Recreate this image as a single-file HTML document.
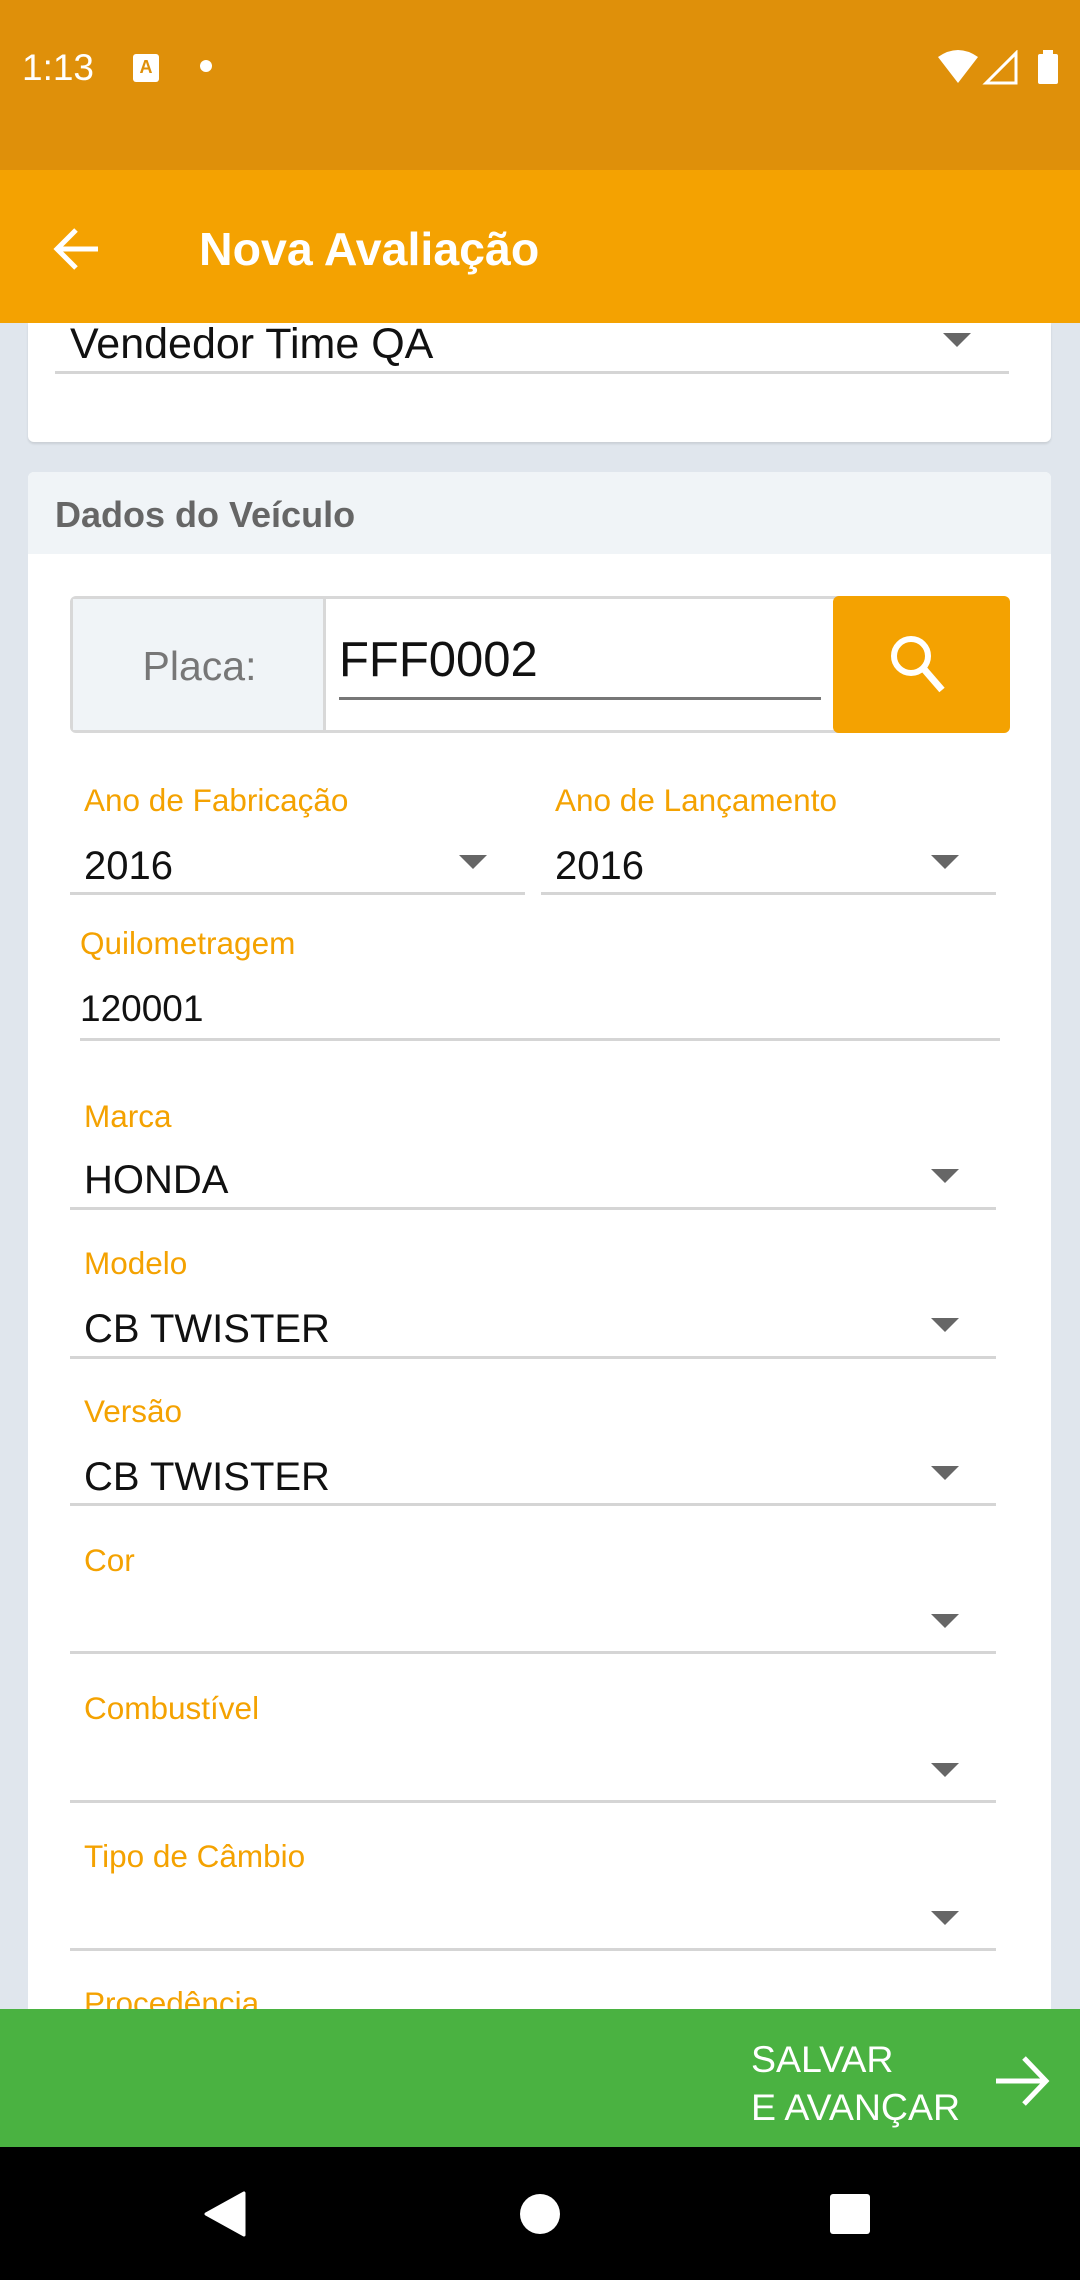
<!DOCTYPE html>
<html><head><meta charset="utf-8"><style>
*{margin:0;padding:0;box-sizing:border-box}
body{width:1080px;height:2280px;position:relative;overflow:hidden;background:#E0E6ED;font-family:"Liberation Sans",sans-serif}
.a{position:absolute}
.lbl{position:absolute;color:#F4A201;font-size:31.5px;line-height:1}
.val{position:absolute;color:#111;font-size:40px;line-height:1}
.ul{position:absolute;height:3px;background:#D5D5D5}
.tri{position:absolute;width:0;height:0;border-left:14px solid transparent;border-right:14px solid transparent;border-top:14px solid #666}
</style></head><body>
<div class="a" style="left:0;top:0;width:1080px;height:170px;background:#DF900A"></div>
<div class="a" style="left:22px;top:47px;color:#fff;font-size:37px">1:13</div>
<div class="a" style="left:133px;top:54px;width:26px;height:28px;background:#fff;border-radius:3px;color:#DF900A;font-size:18px;font-weight:bold;text-align:center;line-height:26px">A</div>
<div class="a" style="left:200px;top:60px;width:12px;height:12px;background:#fff;border-radius:50%"></div>
<svg class="a" style="left:938px;top:50px" width="130" height="36"><path d="M0 7 Q20 -7 40 7 L20 33Z" fill="#fff"/><path d="M48 33 L78 3 L78 33Z" fill="none" stroke="#fff" stroke-width="3"/><rect x="100" y="4" width="20" height="30" rx="2" fill="#fff"/><rect x="105" y="0" width="10" height="5" fill="#fff"/></svg>
<div class="a" style="left:0;top:170px;width:1080px;height:153px;background:#F4A201"></div>
<svg class="a" style="left:52px;top:226px" width="50" height="46"><path d="M46 23H6M24 4L5 23L24 42" fill="none" stroke="#fff" stroke-width="5"/></svg>
<div class="a" style="left:199px;top:222px;color:#fff;font-size:46.5px;font-weight:bold">Nova Avaliação</div>
<div class="a" style="left:28px;top:323px;width:1023px;height:119px;background:#fff;border-radius:0 0 6px 6px;box-shadow:0 2px 2px rgba(0,0,0,.1)"></div>
<div class="val" style="left:70px;top:323px;font-size:43px">Vendedor Time QA</div>
<div class="tri" style="left:943px;top:333px"></div>
<div class="ul" style="left:55px;top:371px;width:954px"></div>
<div class="a" style="left:28px;top:472px;width:1023px;height:1600px;background:#fff;border-radius:6px 6px 0 0"></div>
<div class="a" style="left:28px;top:472px;width:1023px;height:82px;background:#F0F4F7;border-radius:6px 6px 0 0"></div>
<div class="a" style="left:55px;top:494px;color:#666;font-size:36px;font-weight:bold">Dados do Veículo</div>
<div class="a" style="left:70px;top:596px;width:770px;height:137px;border:3px solid #D8D8D8;border-radius:6px 0 0 6px"></div>
<div class="a" style="left:73px;top:599px;width:253px;height:131px;background:#F0F4F7;border-right:3px solid #D8D8D8"></div>
<div class="a" style="left:73px;top:643px;width:253px;text-align:center;color:#777;font-size:41px">Placa:</div>
<div class="a" style="left:339px;top:632px;color:#111;font-size:49px">FFF0002</div>
<div class="a" style="left:339px;top:697px;width:482px;height:3px;background:#777"></div>
<div class="a" style="left:833px;top:596px;width:177px;height:137px;background:#F4A201;border-radius:6px"></div>
<svg class="a" style="left:886px;top:630px" width="70" height="70"><circle cx="25" cy="26" r="17" fill="none" stroke="#fff" stroke-width="6"/><path d="M37 38L56 60" stroke="#fff" stroke-width="7"/></svg>
<div class="lbl" style="left:84px;top:785px">Ano de Fabricação</div>
<div class="lbl" style="left:555px;top:785px">Ano de Lançamento</div>
<div class="val" style="left:84px;top:846px">2016</div>
<div class="val" style="left:555px;top:846px">2016</div>
<div class="tri" style="left:459px;top:855px"></div>
<div class="tri" style="left:931px;top:855px"></div>
<div class="ul" style="left:70px;top:892px;width:455px"></div>
<div class="ul" style="left:541px;top:892px;width:455px"></div>
<div class="lbl" style="left:80px;top:928px">Quilometragem</div>
<div class="val" style="left:80px;top:990px;font-size:37px">120001</div>
<div class="ul" style="left:80px;top:1038px;width:920px"></div>
<div class="lbl" style="left:84px;top:1101px">Marca</div>
<div class="val" style="left:84px;top:1160px">HONDA</div>
<div class="tri" style="left:931px;top:1169px"></div>
<div class="ul" style="left:70px;top:1207px;width:926px"></div>
<div class="lbl" style="left:84px;top:1248px">Modelo</div>
<div class="val" style="left:84px;top:1309px">CB TWISTER</div>
<div class="tri" style="left:931px;top:1318px"></div>
<div class="ul" style="left:70px;top:1356px;width:926px"></div>
<div class="lbl" style="left:84px;top:1396px">Versão</div>
<div class="val" style="left:84px;top:1457px">CB TWISTER</div>
<div class="tri" style="left:931px;top:1466px"></div>
<div class="ul" style="left:70px;top:1503px;width:926px"></div>
<div class="lbl" style="left:84px;top:1545px">Cor</div>
<div class="tri" style="left:931px;top:1614px"></div>
<div class="ul" style="left:70px;top:1651px;width:926px"></div>
<div class="lbl" style="left:84px;top:1693px">Combustível</div>
<div class="tri" style="left:931px;top:1763px"></div>
<div class="ul" style="left:70px;top:1800px;width:926px"></div>
<div class="lbl" style="left:84px;top:1841px">Tipo de Câmbio</div>
<div class="tri" style="left:931px;top:1911px"></div>
<div class="ul" style="left:70px;top:1948px;width:926px"></div>
<div class="lbl" style="left:84px;top:1988px">Procedência</div>
<div class="a" style="left:0;top:2009px;width:1080px;height:138px;background:#4AB241"></div>
<div class="a" style="left:751px;top:2035px;color:#fff;font-size:37.5px;line-height:48px">SALVAR<br>E AVANÇAR</div>
<svg class="a" style="left:994px;top:2054px" width="58" height="54"><path d="M2 27H50M30 4L52 27L30 50" fill="none" stroke="#fff" stroke-width="5"/></svg>
<div class="a" style="left:0;top:2147px;width:1080px;height:133px;background:#000"></div>
<svg class="a" style="left:200px;top:2190px" width="680" height="50"><path d="M44 3V45L6 24Z" fill="#fff" stroke="#fff" stroke-width="3" stroke-linejoin="round"/><circle cx="340" cy="24" r="20" fill="#fff"/><rect x="630" y="4" width="40" height="40" rx="3" fill="#fff"/></svg>
</body></html>
